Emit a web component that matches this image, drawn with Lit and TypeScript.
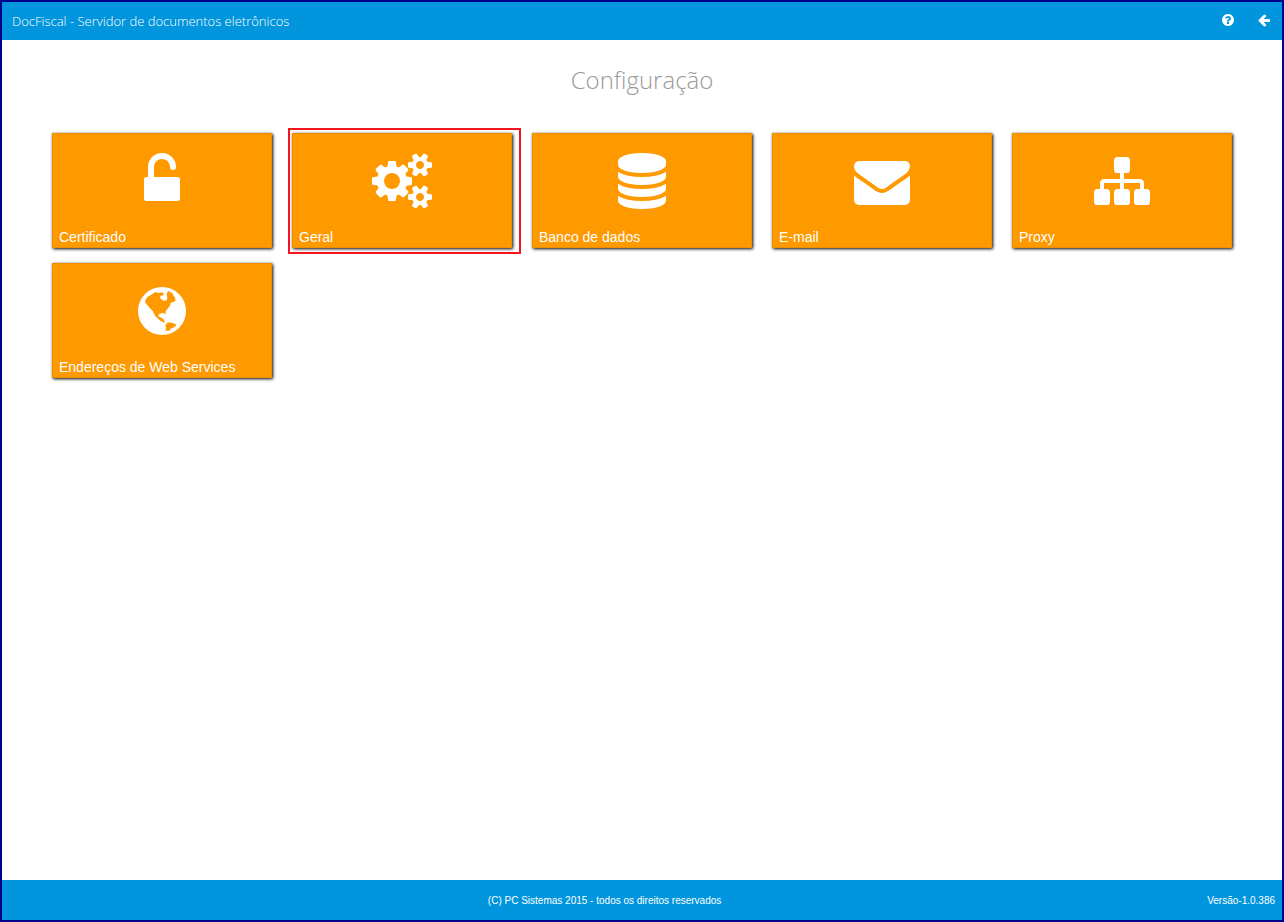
import { LitElement, html, css, svg } from "lit";
import { customElement, property } from "lit/decorators.js";

const ICONS: Record<string, { width: number; body: unknown }> = {
  unlock: {
    width: 1792,
    body: svg`<rect x="320" y="768" width="1152" height="768" rx="80"/><path d="M544 800V448a352 352 0 0 1 704 0" fill="none" stroke="currentColor" stroke-width="192" stroke-linecap="round"/>`,
  },
  cogs: {
    width: 1920,
    body: svg`<path d="M896 896q0-106-75-181t-181-75-181 75-75 181 75 181 181 75 181-75 75-181zm768 512q0-52-38-90t-90-38-90 38-38 90q0 53 37.5 90.5t90.5 37.5 90.5-37.5 37.5-90.5zm0-1024q0-52-38-90t-90-38-90 38-38 90q0 53 37.5 90.5t90.5 37.5 90.5-37.5 37.5-90.5zm-384 421v185q0 10-7 19.5t-16 10.5l-155 24q-11 35-32 76 34 48 90 115 7 11 7 20 0 12-7 19-23 30-82.5 89.5t-78.5 59.5q-11 0-21-7l-115-90q-37 19-77 31-11 108-23 155-7 24-30 24h-186q-11 0-20-7.5t-10-17.5l-23-153q-34-10-75-31l-118 89q-7 7-20 7-11 0-21-8-144-133-144-160 0-9 7-19 10-14 41-53t47-61q-23-44-35-82l-152-24q-10-1-17-9.5t-7-19.5v-185q0-10 7-19.5t16-10.5l155-24q11-35 32-76-34-48-90-115-7-11-7-20 0-12 7-20 22-30 82-89t79-59q11 0 21 7l115 90q34-18 77-32 11-108 23-154 7-24 30-24h186q11 0 20 7.5t10 17.5l23 153q34 10 75 31l118-89q8-7 20-7 11 0 21 8 144 133 144 160 0 8-7 19-12 16-42 54t-45 60q23 48 34 82l152 23q10 2 17 10.5t7 19.5zm640 533v140q0 16-149 31-12 27-30 52 51 113 51 138 0 4-4 7-122 71-124 71-8 0-46-47t-52-68q-20 2-30 2t-30-2q-14 21-52 68t-46 47q-2 0-124-71-4-3-4-7 0-25 51-138-18-25-30-52-149-15-149-31v-140q0-16 149-31 13-29 30-52-51-113-51-138 0-4 4-7 4-2 35-20t59-34 30-16q8 0 46 46.5t52 67.5q20-2 30-2t30 2q51-71 92-112l6-2q4 0 124 70 4 3 4 7 0 25-51 138 17 23 30 52 149 15 149 31zm0-1024v140q0 16-149 31-12 27-30 52 51 113 51 138 0 4-4 7-122 71-124 71-8 0-46-47t-52-68q-20 2-30 2t-30-2q-14 21-52 68t-46 47q-2 0-124-71-4-3-4-7 0-25 51-138-18-25-30-52-149-15-149-31v-140q0-16 149-31 13-29 30-52-51-113-51-138 0-4 4-7 4-2 35-20t59-34 30-16q8 0 46 46.5t52 67.5q20-2 30-2t30 2q51-71 92-112l6-2q4 0 124 70 4 3 4 7 0 25-51 138 17 23 30 52 149 15 149 31z"/>`,
  },
  database: {
    width: 1792,
    body: svg`<path d="M896 768q237 0 443-43t325-127v170q0 69-103 128t-280 93.500-385 34.500-385-34.500-280-93.500-103-128v-170q119 84 325 127t443 43zm0 768q237 0 443-43t325-127v170q0 69-103 128t-280 93.500-385 34.500-385-34.500-280-93.500-103-128v-170q119 84 325 127t443 43zm0-384q237 0 443-43t325-127v170q0 69-103 128t-280 93.500-385 34.500-385-34.500-280-93.500-103-128v-170q119 84 325 127t443 43zm0-1152q208 0 385 34.500t280 93.500 103 128v128q0 69-103 128t-280 93.500-385 34.500-385-34.500-280-93.500-103-128v-128q0-69 103-128t280-93.500 385-34.500z"/>`,
  },
  envelope: {
    width: 1792,
    body: svg`<path d="M1792 710v794q0 66-47 113t-113 47h-1472q-66 0-113-47t-47-113v-794q44 49 101 87 362 246 497 345 57 42 92.500 65.500t94.500 48 110 24.500h2q51 0 110-24.500t94.500-48 92.500-65.500q170-123 498-345 57-39 100-87zm0-294q0 79-49 151t-122 123q-376 261-468 325-10 7-42.500 31t-54 38.500-52 32.500-57.500 27-50 9h-2q-23 0-50-9t-57.500-27-52-32.500-54-38.500-42.500-31q-91-64-262-182.500t-205-142.500q-62-42-117-115.500t-55-136.500q0-78 41.500-130t118.500-52h1472q65 0 112.500 47t47.500 113z"/>`,
  },
  sitemap: {
    width: 1792,
    body: svg`<path d="M1792 1248v320q0 40-28 68t-68 28h-320q-40 0-68-28t-28-68v-320q0-40 28-68t68-28h96v-192h-512v192h96q40 0 68 28t28 68v320q0 40-28 68t-68 28h-320q-40 0-68-28t-28-68v-320q0-40 28-68t68-28h96v-192h-512v192h96q40 0 68 28t28 68v320q0 40-28 68t-68 28h-320q-40 0-68-28t-28-68v-320q0-40 28-68t68-28h96v-192q0-52 38-90t90-38h512v-192h-96q-40 0-68-28t-28-68v-320q0-40 28-68t68-28h320q40 0 68 28t28 68v320q0 40-28 68t-68 28h-96v192h512q52 0 90 38t38 90v192h96q40 0 68 28t28 68z"/>`,
  },
  globe: {
    width: 1792,
    body: svg`<circle cx="896" cy="896" r="768"/><g fill="#f90"><path d="M363 555L427 448 576 363 683 288 789 320 917 299 960 384 853 405 832 491 960 576 1045 555 1067 469 1045 363 1088 256 1216 320 1323 491 1323 576 1173 640 1152 725 1067 832 1003 917 1024 1003 939 960 811 981 768 1067 875 1109 939 1152 1003 1280 853 1216 683 1067 597 896 512 811 427 704 363 640z"/><path d="M1088 1259L1237 1280 1365 1333 1301 1408 1195 1451 1131 1525 1003 1525 1024 1429 1003 1344z"/></g>`,
  },
  help: {
    width: 1792,
    body: svg`<path d="M1024 1376v-192q0-14-9-23t-23-9h-192q-14 0-23 9t-9 23v192q0 14 9 23t23 9h192q14 0 23-9t9-23zm256-672q0-88-55.500-163t-138.500-116-170-41q-243 0-371 213-15 24 8 42l132 100q7 6 19 6 16 0 25-12 53-68 86-92 34-24 86-24 48 0 85.500 26t37.500 59q0 38-20 61t-68 45q-63 28-115.500 86.500t-52.500 125.500v36q0 14 9 23t23 9h192q14 0 23-9t9-23q0-19 21.500-49.500t54.500-49.500q32-18 49-28.500t46-35 44.500-48 28-60.500 12.500-81zm384 192q0 209-103 385.500t-279.500 279.500-385.500 103-385.500-103-279.500-279.500-103-385.500 103-385.500 279.500-279.500 385.500-103 385.500 103 279.500 279.500 103 385.500z"/>`,
  },
  back: {
    width: 1792,
    body: svg`<path d="M1664 896v128q0 53-32.500 90.500t-84.500 37.500h-704l293 294q38 36 38 90t-38 90l-75 76q-37 37-90 37-52 0-91-37l-651-652q-37-37-37-90 0-52 37-91l651-650q38-38 91-38 52 0 90 38l75 74q38 38 38 91t-38 91l-293 293h704q52 0 84.500 37.500t32.500 90.500z"/>`,
  },
};

@customElement("app-icon")
class AppIcon extends LitElement {
  @property() name = "";

  static styles = css`
    :host {
      display: block;
      height: 1em;
    }
    .glyph {
      display: block;
      height: 1em;
      fill: currentColor;
    }
  `;

  render() {
    const icon = ICONS[this.name];
    return html`<svg class="glyph" viewBox="0 0 ${icon.width} 1792" aria-hidden="true">${icon.body}</svg>`;
  }
}

@customElement("config-tile")
class ConfigTile extends LitElement {
  @property() icon = "";
  @property() label = "";
  @property({ type: Boolean, reflect: true }) marked = false;

  static styles = css`
    :host {
      display: block;
      position: relative;
    }
    :host([marked])::after {
      content: "";
      position: absolute;
      inset: -5px -9px -6px -4px;
      border: 2px solid #f51420;
      pointer-events: none;
    }
    .tile {
      display: flex;
      flex-direction: column;
      justify-content: space-between;
      width: 100%;
      height: 115px;
      margin: 0;
      padding: 19px 6px 2px;
      border: 1px solid #ed8e00;
      background: #f90;
      box-shadow: 1px 1px 3px #000;
      color: #fff;
      font: 14px/16px "Liberation Sans", Arial, sans-serif;
      text-align: left;
      cursor: pointer;
    }
    .icon {
      align-self: center;
      font-size: 56px;
    }
  `;

  render() {
    return html`
      <button class="tile" type="button">
        <app-icon class="icon" name=${this.icon}></app-icon>
        <span>${this.label}</span>
      </button>
    `;
  }
}

@customElement("app-root")
class AppRoot extends LitElement {
  static styles = css`
    :host {
      display: flex;
      flex-direction: column;
      box-sizing: border-box;
      min-height: 100vh;
      border: 2px solid #00008b;
      background: #fff;
      font-family: "Liberation Sans", Arial, sans-serif;
    }
    .bar {
      display: flex;
      align-items: center;
      justify-content: space-between;
      box-sizing: border-box;
      height: 38px;
      padding: 0 11px 0 10px;
      background: #0095dc;
      color: #fff;
    }
    .brand {
      font: 300 13px/18px "Open Sans", "Noto Sans", sans-serif;
    }
    .actions {
      display: flex;
      gap: 22px;
      padding-bottom: 2px;
    }
    .action {
      margin: 0;
      padding: 0;
      border: 0;
      background: none;
      color: inherit;
      font-size: 14px;
      cursor: pointer;
    }
    .content {
      flex: 1;
      padding: 20px 50px;
    }
    .title {
      margin: 0 0 33px;
      color: #999;
      font: 300 24px/40px "Open Sans", "Noto Sans", sans-serif;
      text-align: center;
    }
    .tiles {
      display: grid;
      grid-template-columns: repeat(auto-fill, 220px);
      gap: 15px 20px;
    }
    .footer {
      display: flex;
      align-items: center;
      box-sizing: border-box;
      height: 40px;
      padding: 2px 7px 0 0;
      background: #0095dc;
      color: #fff;
      font-size: 10px;
      line-height: 12px;
    }
    .copyright {
      flex: 1;
      text-align: center;
    }
  `;

  private tiles = [
    { icon: "unlock", label: "Certificado" },
    { icon: "cogs", label: "Geral", marked: true },
    { icon: "database", label: "Banco de dados" },
    { icon: "envelope", label: "E-mail" },
    { icon: "sitemap", label: "Proxy" },
    { icon: "globe", label: "Endereços de Web Services" },
  ];

  render() {
    return html`
      <header class="bar">
        <span class="brand">DocFiscal - Servidor de documentos eletrônicos</span>
        <nav class="actions">
          <button class="action" type="button" aria-label="Ajuda"><app-icon name="help"></app-icon></button>
          <button class="action" type="button" aria-label="Voltar"><app-icon name="back"></app-icon></button>
        </nav>
      </header>
      <main class="content">
        <h1 class="title">Configuração</h1>
        <div class="tiles">
          ${this.tiles.map(
            (t) => html`<config-tile icon=${t.icon} label=${t.label} ?marked=${t.marked}></config-tile>`
          )}
        </div>
      </main>
      <footer class="footer">
        <span class="copyright">(C) PC Sistemas 2015 - todos os direitos reservados</span>
        <span>Versão-1.0.386</span>
      </footer>
    `;
  }
}
